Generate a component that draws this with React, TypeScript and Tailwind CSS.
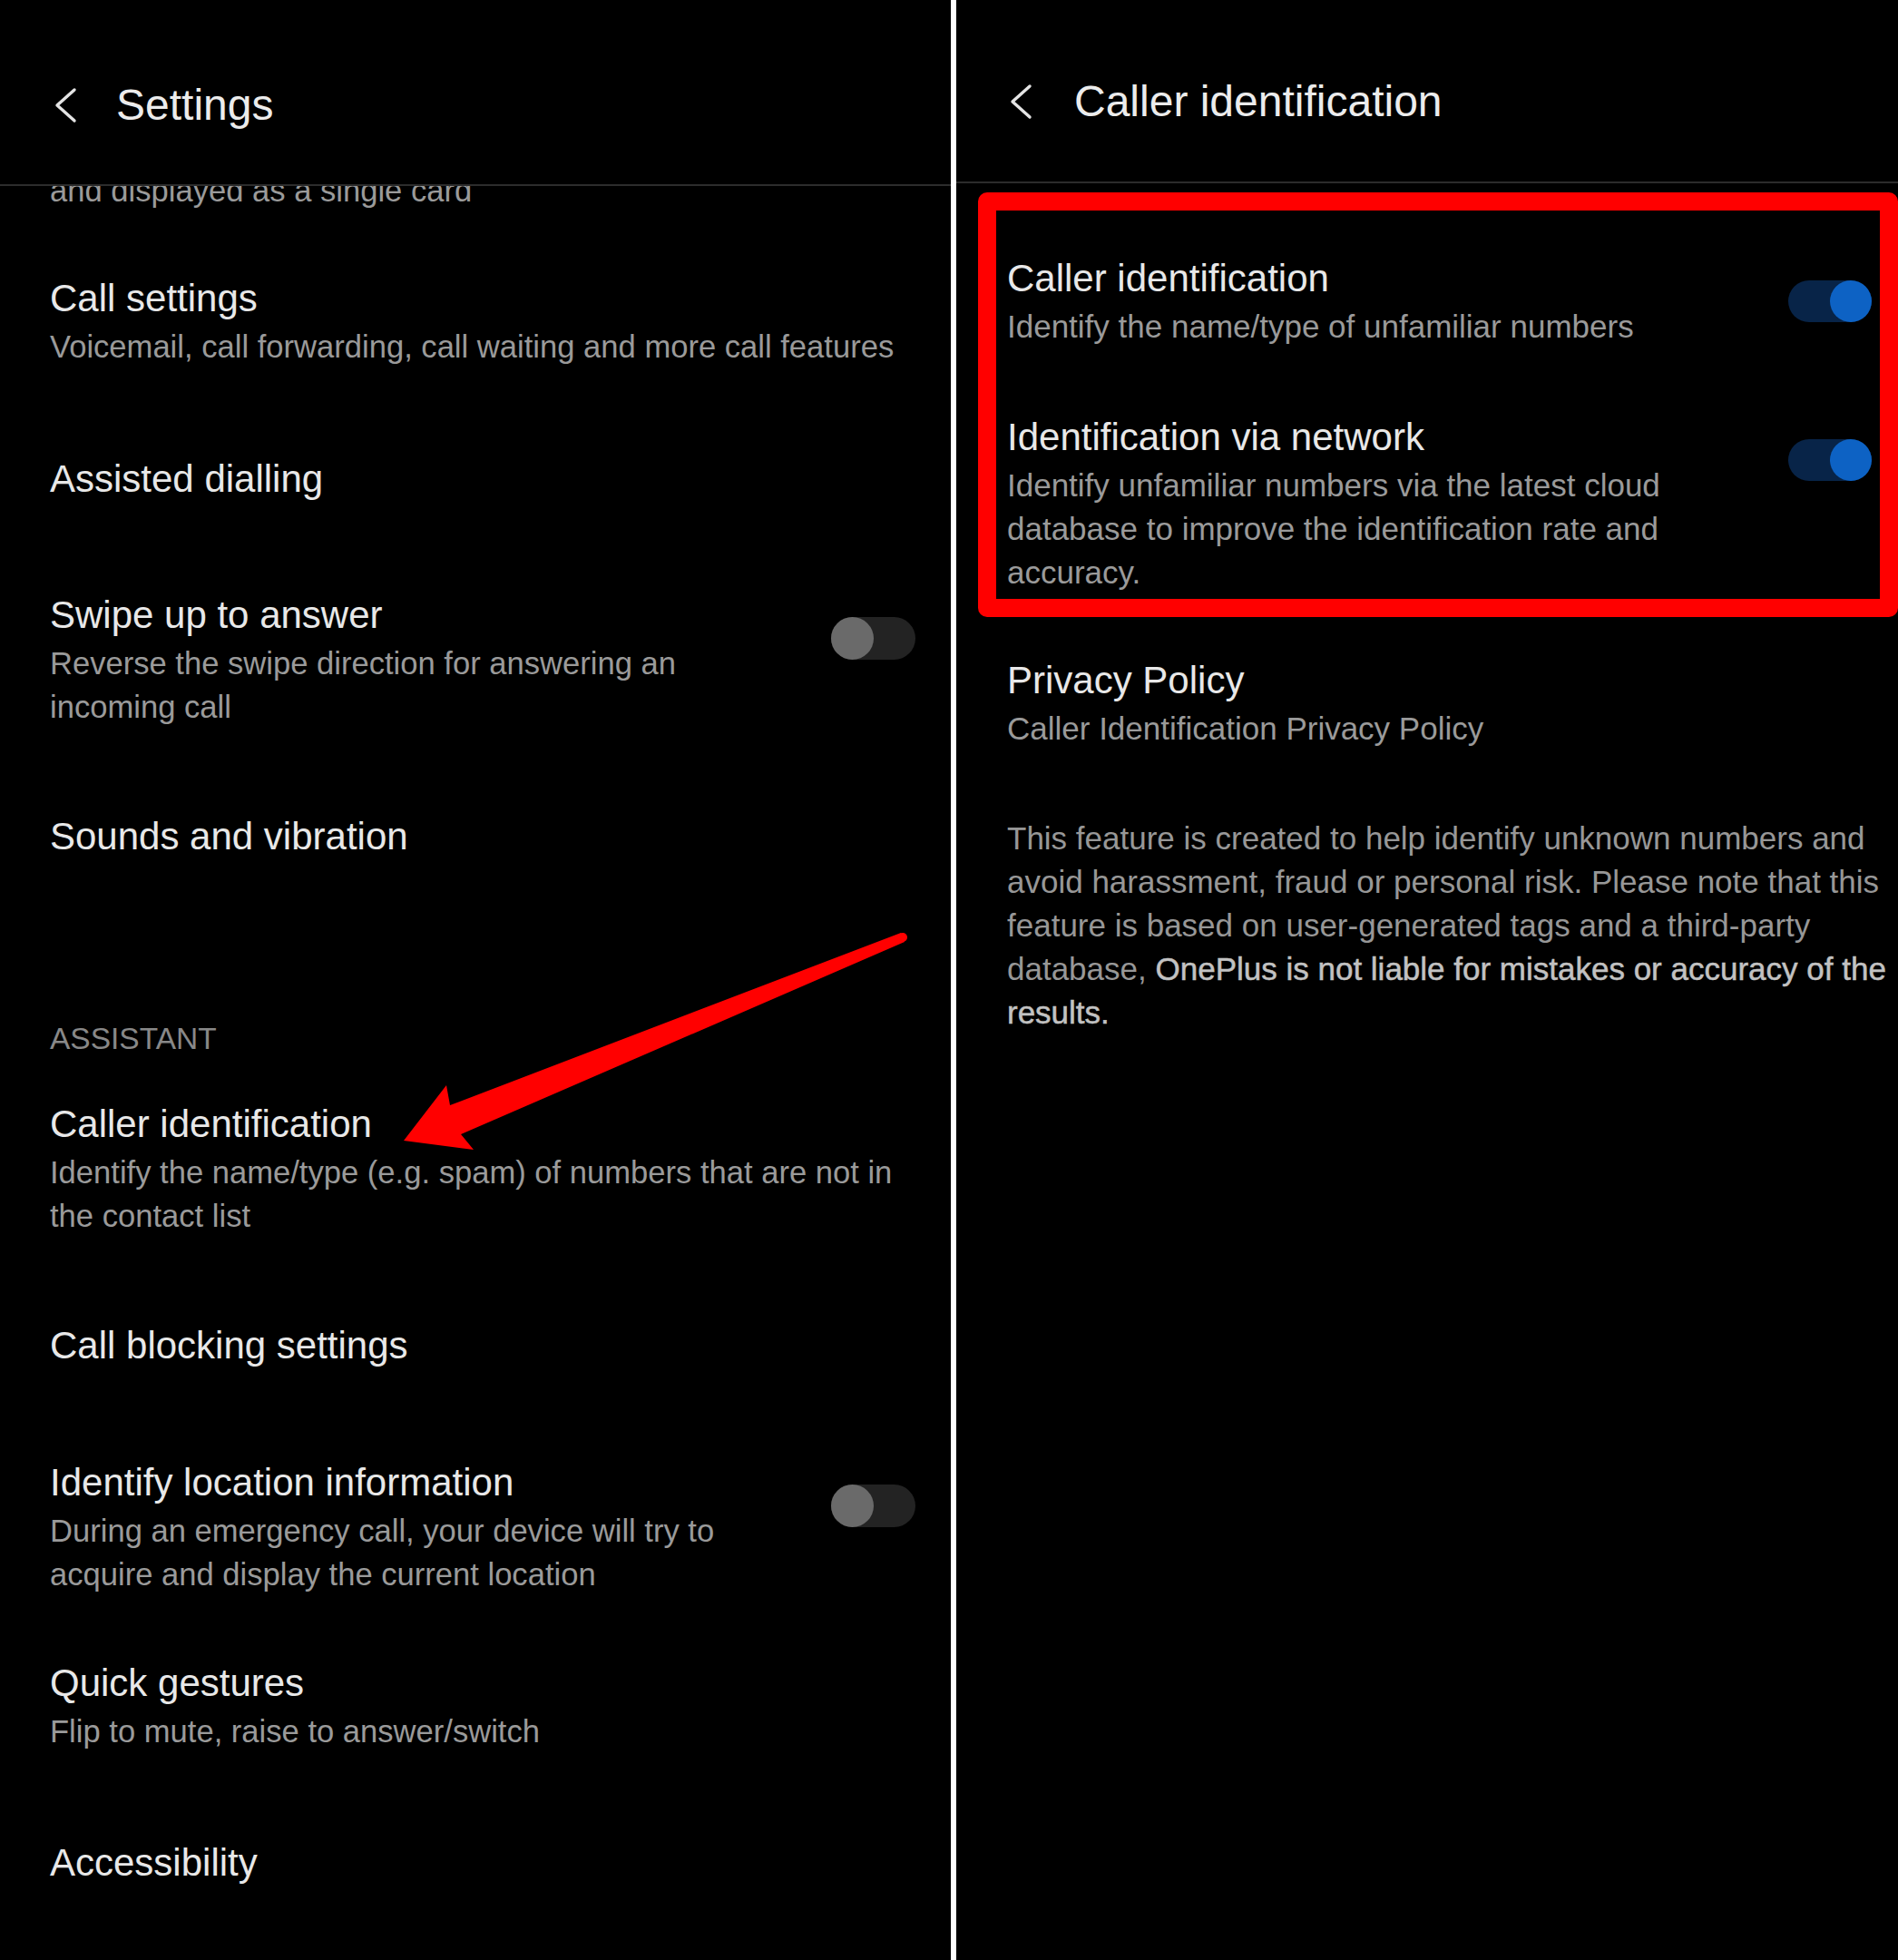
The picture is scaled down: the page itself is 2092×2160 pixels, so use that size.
import React from "react";

const FONT = "font-['Liberation_Sans','Arial',sans-serif]";

function Toggle({ on }: { on: boolean }) {
  if (on) {
    return (
      <div className="flex h-[46px] w-[92px] shrink-0 justify-end rounded-full bg-[#082448]">
        <div className="h-[46px] w-[46px] rounded-full bg-[#0d62c4]" />
      </div>
    );
  }
  return (
    <div className="flex h-[47px] w-[93px] shrink-0 justify-start rounded-full bg-[#232323]">
      <div className="h-[47px] w-[47px] rounded-full bg-[#6a6a6a]" />
    </div>
  );
}

function Item({
  title,
  subs = [],
  toggle,
  className = "",
  subSize = "text-[34.6px]",
}: {
  title: string;
  subs?: string[];
  toggle?: boolean;
  className?: string;
  subSize?: string;
}) {
  return (
    <div className={`flex items-start justify-between ${className}`}>
      <div className="flex flex-col">
        <div className="whitespace-nowrap text-[42px] leading-[58px] text-[#e8e8e8]">{title}</div>
        {subs.map((s, i) => (
          <div key={i} className={`whitespace-nowrap ${subSize} leading-[48px] text-[#9a9a9a]`}>
            {s}
          </div>
        ))}
      </div>
      {toggle !== undefined && (
        <div className="mt-[31px]">
          <Toggle on={toggle} />
        </div>
      )}
    </div>
  );
}

function Chevron() {
  return (
    <svg width="26" height="40" viewBox="0 0 26 40" className="shrink-0">
      <polyline
        points="23,3 4,20 23,37"
        fill="none"
        stroke="#e4e4e4"
        strokeWidth="3.4"
        strokeLinecap="round"
        strokeLinejoin="round"
      />
    </svg>
  );
}

export default function App() {
  return (
    <div className={`flex h-[2160px] w-[2092px] overflow-hidden bg-black ${FONT}`}>
      {/* Left panel */}
      <div className="relative flex h-full w-[1048px] shrink-0 flex-col">
        <div className="h-[205px] shrink-0 border-b-2 border-[#2c2c2c]">
          <div className="mt-[88px] flex h-[56px] items-center pl-[59px]">
            <Chevron />
            <div className="ml-[43px] text-[48px] leading-[56px] text-[#ececec]">Settings</div>
          </div>
        </div>
        <div className="flex flex-1 flex-col overflow-hidden pl-[55px] pr-[39px]">
          <div className="-mt-[19px] h-[48px] shrink-0 whitespace-nowrap text-[34.6px] leading-[48px] text-[#9a9a9a]">
            and displayed as a single card
          </div>
          <Item
            className="mt-[66px]"
            title="Call settings"
            subs={["Voicemail, call forwarding, call waiting and more call features"]}
          />
          <Item className="mt-[93px]" title="Assisted dialling" />
          <Item
            className="mt-[92px]"
            title="Swipe up to answer"
            subs={["Reverse the swipe direction for answering an", "incoming call"]}
            toggle={false}
          />
          <Item className="mt-[90px]" title="Sounds and vibration" />
          <div className="mt-[170px] text-[33.5px] leading-[48px] text-[#888888]">ASSISTANT</div>
          <Item
            className="mt-[41px]"
            title="Caller identification"
            subs={["Identify the name/type (e.g. spam) of numbers that are not in", "the contact list"]}
          />
          <Item className="mt-[90px]" title="Call blocking settings" />
          <Item
            className="mt-[93px]"
            title="Identify location information"
            subs={["During an emergency call, your device will try to", "acquire and display the current location"]}
            toggle={false}
          />
          <Item
            className="mt-[67px]"
            title="Quick gestures"
            subs={["Flip to mute, raise to answer/switch"]}
          />
          <Item className="mt-[92px]" title="Accessibility" />
        </div>

        {/* Red annotation arrow */}
        <svg
          className="pointer-events-none absolute left-0 top-0"
          width="1048"
          height="2160"
          viewBox="0 0 1048 2160"
        >
          <polygon
            points="445,1257 492,1196 496,1218 993,1028 997,1038 508,1250 522,1267"
            fill="#ff0000"
          />
          <circle cx="995" cy="1033" r="5" fill="#ff0000" />
        </svg>
      </div>

      {/* White divider */}
      <div className="h-full w-[6px] shrink-0 bg-white" />

      {/* Right panel */}
      <div className="flex h-full flex-1 flex-col">
        <div className="h-[202px] shrink-0 border-b-2 border-[#2c2c2c]">
          <div className="mt-[84px] flex h-[56px] items-center pl-[58px]">
            <Chevron />
            <div className="ml-[46px] whitespace-nowrap text-[48px] leading-[56px] text-[#ececec]">
              Caller identification
            </div>
          </div>
        </div>

        <div className="ml-[24px] mt-[10px] rounded-[10px] border-[20px] border-[#ff0000] pb-[5px] pl-[12px] pr-[9px] pt-[46px]">
          <Item
            title="Caller identification"
            subs={["Identify the name/type of unfamiliar numbers"]}
            toggle={true}
            subSize="text-[35px]"
          />
          <Item
            className="mt-[69px]"
            title="Identification via network"
            subs={[
              "Identify unfamiliar numbers via the latest cloud",
              "database to improve the identification rate and",
              "accuracy.",
            ]}
            toggle={true}
            subSize="text-[35px]"
          />
        </div>

        <div className="flex flex-col pl-[56px]">
          <Item
            className="mt-[41px]"
            title="Privacy Policy"
            subs={["Caller Identification Privacy Policy"]}
            subSize="text-[35px]"
          />
          <div className="mt-[73px] flex flex-col text-[35px] leading-[48px] text-[#979797]">
            <div className="whitespace-nowrap">This feature is created to help identify unknown numbers and</div>
            <div className="whitespace-nowrap">avoid harassment, fraud or personal risk. Please note that this</div>
            <div className="whitespace-nowrap">feature is based on user-generated tags and a third-party</div>
            <div className="whitespace-nowrap">
              database,{" "}
              <span className="text-[#c2c2c2] [-webkit-text-stroke:0.5px_#c2c2c2]">
                OnePlus is not liable for mistakes or accuracy of the
              </span>
            </div>
            <div className="whitespace-nowrap text-[#c2c2c2] [-webkit-text-stroke:0.5px_#c2c2c2]">results.</div>
          </div>
        </div>
      </div>
    </div>
  );
}
